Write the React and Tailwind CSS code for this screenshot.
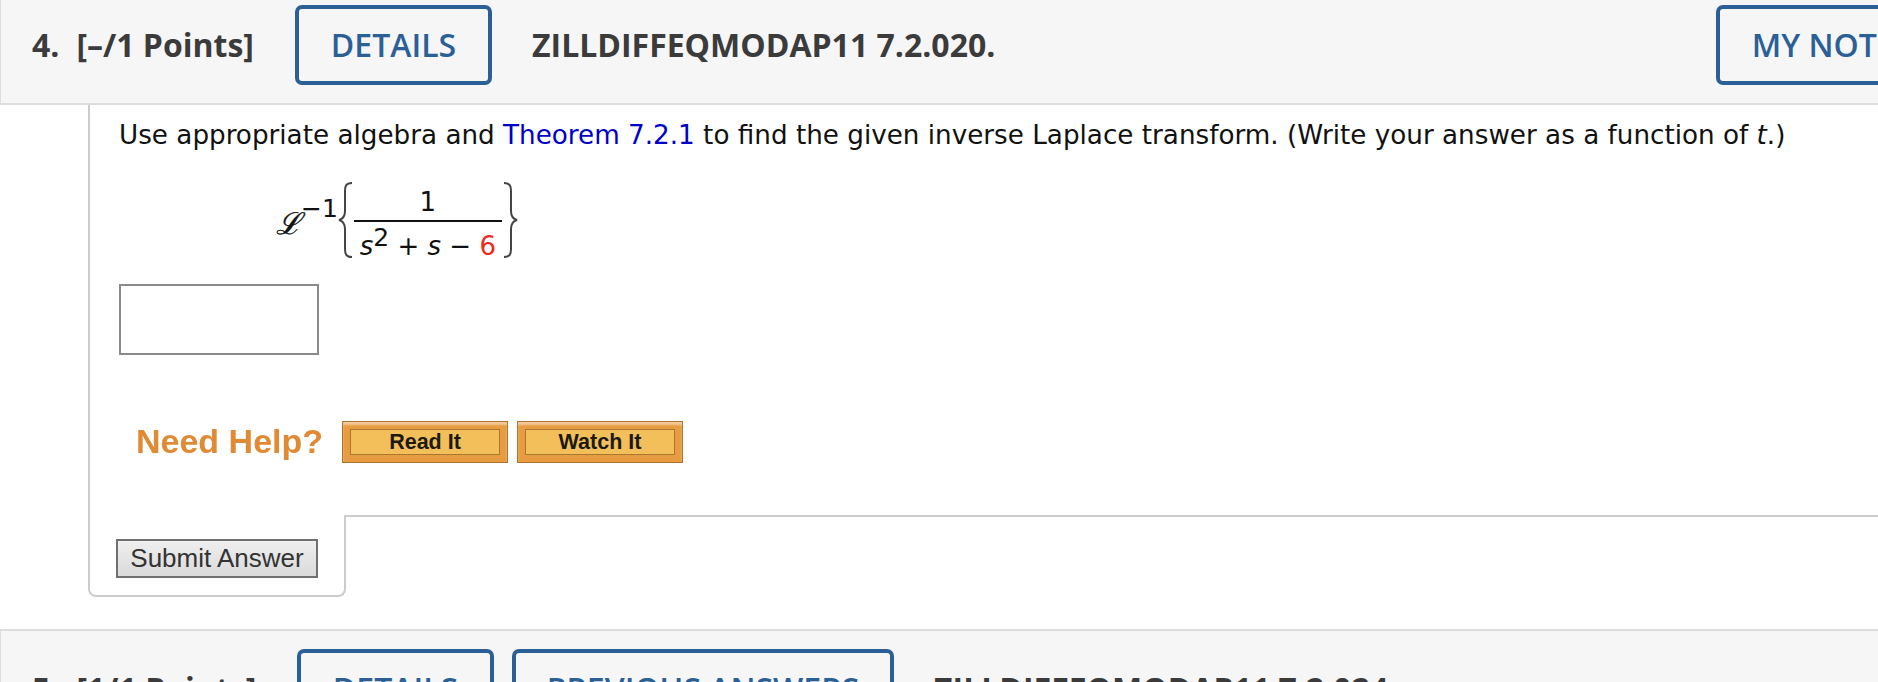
import React from 'react';

const openSans = "font-['Open_Sans',sans-serif]";
const verdana = "font-['DejaVu_Sans',sans-serif]";
const arial = "font-['Liberation_Sans',sans-serif]";

const OutlineButton = ({ children, className = '' }) => (
    <div className={`flex items-center justify-center shrink-0 h-[80px] rounded-[7px] border-[4px] border-[#2a6095] text-[#2a6095] text-[32px] font-semibold whitespace-nowrap ${className}`}>
        {children}
    </div>
);

const HelpButton = ({ label }) => (
    <div className="w-[166px] h-[42px] p-[7px] border border-[#ad7434] bg-[#e89c42] shadow-[inset_0_3px_2px_rgba(255,255,255,0.45)]">
        <div className={`${arial} flex items-center justify-center h-full pt-[2px] border border-[#a9772f] bg-[#f2bf5b] text-[#1c1a10] text-[21.5px] font-bold`}>
            {label}
        </div>
    </div>
);

const Brace = ({ flip }) => (
    <svg width="16" height="78" viewBox="0 0 16 78" className={flip ? '-scale-x-100' : ''} fill="none" stroke="#444" strokeWidth="2">
        <path d="M14 2C8 2 7 5 7 10V30C7 35 5 38 1 39C5 40 7 43 7 48V68C7 73 8 76 14 76" />
    </svg>
);

const Points = ({ num, points, width }) => (
    <div className={`flex items-center shrink-0 h-[80px] text-[32px] font-bold ${width}`}>
        <span className="ml-[31px]">{num}</span>
        <span className="ml-[17px]">{points}</span>
    </div>
);

export default function App() {
    return (
        <div className="w-[1878px] h-[682px] overflow-hidden bg-white">
            {/* Question 4 header */}
            <header className={`${openSans} flex items-start h-[105px] pt-[5px] bg-[#f6f6f6] border-l border-b-2 border-[#ddd] text-[#3b3b3b] overflow-hidden`}>
                <Points num="4." points="[–/1 Points]" width="w-[294px]" />
                <OutlineButton className="w-[197px]">DETAILS</OutlineButton>
                <div className="flex items-center h-[80px] ml-[40px] text-[32px] font-bold">ZILLDIFFEQMODAP11 7.2.020.</div>
                <OutlineButton className="ml-auto mr-[-70px] w-[232px]">MY NOTES</OutlineButton>
            </header>

            {/* Question body */}
            <section className="ml-[88px] h-[410px] pl-[29px] border-l-2 border-[#ccc]">
                <p className={`${verdana} pt-[13px] text-[26.22px] leading-[34px] text-[#111] whitespace-nowrap`}>
                    Use appropriate algebra and <span className="text-[#0000c8]">Theorem 7.2.1</span> to find the given inverse Laplace transform. (Write your answer as a function of <i>t</i>.)
                </p>

                <div className={`${verdana} flex items-center mt-[28px] ml-[157px] h-[80px] text-[#111]`}>
                    <span className="font-['DejaVu_Serif',serif] italic text-[30px] mt-[6px] [-webkit-text-stroke:0.4px_#111]">ℒ</span>
                    <span className="text-[25px] self-start mt-[10px]">−1</span>
                    <Brace />
                    <div className="flex flex-col items-stretch w-[148px] text-center text-[26px]">
                        <div className="h-[42px] leading-[44px] border-b-2 border-[#111]">1</div>
                        <div className="h-[38px] leading-[48px] whitespace-nowrap">
                            <i>s</i><span className="text-[25px] leading-[0] align-[9px]">2</span> + <i>s</i> − <span className="text-[#ee2a1c]">6</span>
                        </div>
                    </div>
                    <Brace flip />
                </div>

                <input className="block mt-[24px] w-[200px] h-[71px] border-2 border-[#8a8a8a] bg-white" aria-label="answer" />

                <div className="flex items-center mt-[61px] ml-[17px]">
                    <span className={`${arial} w-[206px] text-[#e08a34] text-[34px] font-semibold blur-[0.4px]`}>Need Help?</span>
                    <div className="flex gap-[9px]">
                        <HelpButton label="Read It" />
                        <HelpButton label="Watch It" />
                    </div>
                </div>
            </section>

            {/* Submit row */}
            <div className="flex h-[82px]">
                <div className="ml-[88px] w-[258px] border-l-2 border-r-2 border-b-2 border-[#ccc] rounded-b-lg pt-[24px] pl-[26px]">
                    <button className={`${arial} w-[202px] h-[39px] pb-[2px] border-2 border-[#707070] bg-gradient-to-b from-[#efefef] to-[#dadada] text-[26px] leading-none text-[#333] whitespace-nowrap`}>
                        Submit Answer
                    </button>
                </div>
                <div className="flex-1 border-t-2 border-[#ccc]"></div>
            </div>

            {/* Question 5 header */}
            <header className={`${openSans} flex items-start h-[110px] mt-[32px] pt-[18px] bg-[#f6f6f6] border-l border-t-2 border-[#ddd] text-[#3b3b3b]`}>
                <Points num="5." points="[1/1 Points]" width="w-[296px]" />
                <OutlineButton className="w-[197px]">DETAILS</OutlineButton>
                <OutlineButton className="ml-[18px] w-[382px]">PREVIOUS ANSWERS</OutlineButton>
                <div className="flex items-center h-[80px] ml-[40px] text-[32px] font-bold">ZILLDIFFEQMODAP11 7.2.024.</div>
            </header>
        </div>
    );
}
